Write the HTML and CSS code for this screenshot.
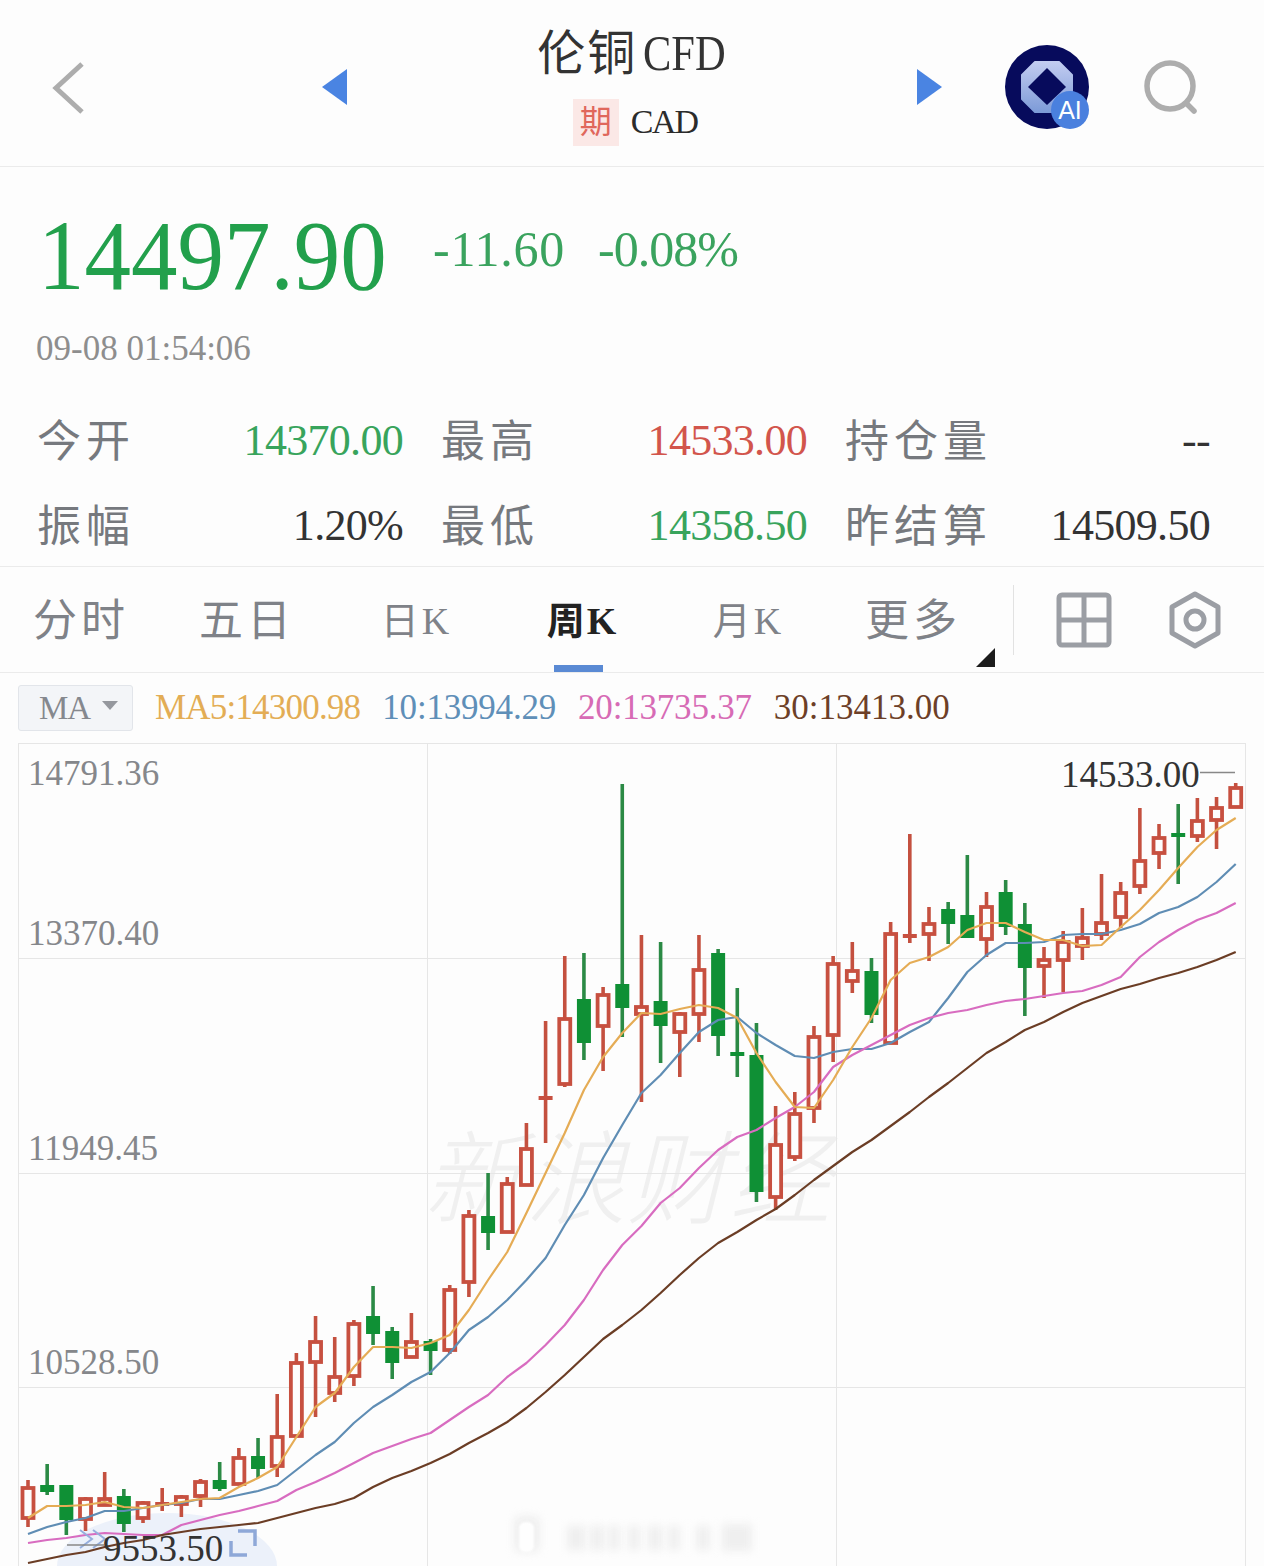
FILE: index.html
```html
<!DOCTYPE html>
<html lang="en">
<head>
    <meta charset="UTF-8">
    <meta name="viewport" content="width=device-width, initial-scale=1.0">
    <title>伦铜CFD</title>
    <link rel="stylesheet" href="styles.css">
</head>
<body>
    <div class="header">
        <div class="back">
            <svg width="34" height="54" viewBox="0 0 34 54"><path d="M30 3 L4 27 L30 51" class="back-line"/></svg>
        </div>
        <svg class="arrow" width="25" height="36" viewBox="0 0 25 36"><path d="M25 0 V36 L0 18 Z" fill="#4a84e2"/></svg>
        <div class="title-block">
            <div class="title">伦铜<span class="title-code">CFD</span></div>
            <div class="subtitle"><span class="tag">期</span><span class="code">CAD</span></div>
        </div>
        <svg class="arrow" width="25" height="36" viewBox="0 0 25 36"><path d="M0 0 V36 L25 18 Z" fill="#4a84e2"/></svg>
        <div class="ai-badge">
            <svg width="84" height="84" viewBox="0 0 84 84">
                <defs>
                    <linearGradient id="aiRing" x1="0" y1="0" x2="0" y2="1">
                        <stop offset="0" stop-color="#c2ccf1"/>
                        <stop offset="1" stop-color="#7d9bd8"/>
                    </linearGradient>
                </defs>
                <circle cx="42" cy="42" r="42" fill="#070b5c"/>
                <path d="M30 17 H54 L67 30 V54 L54 67 H30 L17 54 V30 Z" fill="url(#aiRing)" stroke="url(#aiRing)" stroke-width="2" stroke-linejoin="round"/>
                <path d="M42 23 L61 42 L42 60 L23 42 Z" fill="#070b5c"/>
            </svg>
            <span class="ai-dot">AI</span>
        </div>
        <svg class="search" width="56" height="56" viewBox="0 0 56 56"><circle cx="26" cy="26" r="23" fill="none" stroke="#adadad" stroke-width="5.5"/><path d="M43 44 L50 51" stroke="#adadad" stroke-width="5.5" stroke-linecap="round" fill="none"/></svg>
    </div>

    <div class="quote">
        <div class="price-row">
            <div class="price">14497.90</div>
            <div class="change">-11.60</div>
            <div class="change change-pct">-0.08%</div>
        </div>
        <div class="time">09-08 01:54:06</div>
        <div class="stats">
            <div class="stat"><span class="stat-name">今开</span><span class="stat-value green">14370.00</span></div>
            <div class="stat"><span class="stat-name">最高</span><span class="stat-value red">14533.00</span></div>
            <div class="stat"><span class="stat-name">持仓量</span><span class="stat-value">--</span></div>
            <div class="stat"><span class="stat-name">振幅</span><span class="stat-value">1.20%</span></div>
            <div class="stat"><span class="stat-name">最低</span><span class="stat-value green">14358.50</span></div>
            <div class="stat"><span class="stat-name">昨结算</span><span class="stat-value">14509.50</span></div>
        </div>
    </div>

    <div class="tabs">
        <div class="tab">分时</div>
        <div class="tab">五日</div>
        <div class="tab tab-k">日K</div>
        <div class="tab tab-k active">周K</div>
        <div class="tab tab-k">月K</div>
        <div class="tab more">更多</div>
        <div class="tab-tools">
            <svg width="56" height="56" viewBox="0 0 56 56"><rect x="3" y="3" width="50" height="50" rx="3" fill="none" stroke="#9b9ea4" stroke-width="5"/><path d="M28 3 V53 M3 28 H53" stroke="#9b9ea4" stroke-width="5"/></svg>
            <svg width="54" height="58" viewBox="0 0 54 58"><path d="M27 3 L50 16 V42 L27 55 L4 42 V16 Z" fill="none" stroke="#9b9ea4" stroke-width="5" stroke-linejoin="round"/><circle cx="27" cy="29" r="9" fill="none" stroke="#9b9ea4" stroke-width="5"/></svg>
        </div>
    </div>

    <div class="legend">
        <div class="ma-btn">MA<span class="ma-caret"></span></div>
        <span class="ma ma5">MA5:14300.98</span>
        <span class="ma ma10">10:13994.29</span>
        <span class="ma ma20">20:13735.37</span>
        <span class="ma ma30">30:13413.00</span>
    </div>

    <div class="chart">
        <div class="watermark">新浪财经</div>
        <svg class="chart-svg" id="chart" width="1228" height="823" viewBox="18 743 1228 823">
            <path class="grid" d="M427.5 743 V1566 M836.5 743 V1566 M18 958.5 H1246 M18 1173.5 H1246 M18 1387.5 H1246"/>
            <ellipse class="float-pill" cx="167" cy="1566" rx="110" ry="53"/>
            <g class="blur-mark">
                <rect x="514" y="1516" width="26" height="36" rx="6"/>
                <rect class="blur-core" x="519" y="1522" width="15" height="30" rx="6"/>
                <rect x="567" y="1526" width="18" height="24"/>
                <rect x="590" y="1526" width="14" height="24"/>
                <rect x="608" y="1526" width="12" height="24"/>
                <rect x="628" y="1526" width="12" height="24"/>
                <rect x="648" y="1526" width="14" height="24"/>
                <rect x="668" y="1526" width="12" height="24"/>
                <rect x="696" y="1526" width="14" height="24"/>
                <rect x="722" y="1524" width="30" height="27"/>
            </g>
            <g id="candles"></g>
            <g id="lines"></g>
            <path class="chev" d="M80 1530 L92 1539 L80 1548 M93 1530 L105 1539 L93 1548"/>
            <path class="corner" d="M238 1531 H255 V1546 M231 1541 V1555 H247"/>
            <path class="marker" d="M1200 772.5 H1235 M67 1545 H104"/>
        </svg>
        <span class="axis axis-1">14791.36</span>
        <span class="axis axis-2">13370.40</span>
        <span class="axis axis-3">11949.45</span>
        <span class="axis axis-4">10528.50</span>
        <span class="peak peak-high">14533.00</span>
        <span class="peak peak-low">9553.50</span>
    </div>

    <script src="chart.js"></script>
</body>
</html>
```

FILE: styles.css
```css
body, html {
    margin: 0;
    padding: 0;
    width: 100%;
    height: 100%;
    overflow: hidden;
    background-color: #fdfdfd;
    color: #2b2b2b;
    font-family: "Liberation Serif", "Noto Sans CJK SC", serif;
}

.header {
    height: 167px;
    box-sizing: border-box;
    padding: 10px 0 0 52px;
    display: flex;
    align-items: center;
    border-bottom: 1px solid #ebebeb;
}
.back {
    width: 270px;
    display: flex;
}
.back-line {
    fill: none;
    stroke: #adadad;
    stroke-width: 5;
}
.title-block {
    width: 570px;
    display: flex;
    flex-direction: column;
    align-items: center;
    margin-top: -8px;
}
.title {
    font-size: 48px;
    line-height: 60px;
    letter-spacing: 2px;
    color: #333;
}
.title-code {
    display: inline-block;
    font-size: 50px;
    letter-spacing: 0;
    margin-left: 6px;
    margin-right: -14px;
    transform: scaleX(0.85);
    transform-origin: left center;
}
.subtitle {
    display: flex;
    align-items: center;
    margin-top: 15px;
    margin-left: 6px;
}
.tag {
    width: 46px;
    height: 47px;
    background: #fbe8e6;
    color: #e0675c;
    font-size: 32px;
    line-height: 47px;
    text-align: center;
}
.code {
    margin-left: 12px;
    font-size: 34px;
    letter-spacing: -1.8px;
}
.ai-badge {
    position: relative;
    margin-left: 63px;
    width: 84px;
    height: 84px;
    margin-top: -2px;
}
.ai-dot {
    position: absolute;
    left: 46px;
    top: 46px;
    width: 38px;
    height: 38px;
    border-radius: 50%;
    background: #4a80de;
    color: #fff;
    font-family: "Liberation Sans", sans-serif;
    font-size: 25px;
    line-height: 38px;
    text-align: center;
}
.search {
    margin-left: 55px;
}
.arrow {
    margin-top: -3px;
}

.quote {
    height: 399px;
    box-sizing: border-box;
    padding-top: 29px;
}
.price-row {
    height: 120px;
    padding-left: 38px;
    display: flex;
    align-items: center;
    color: #22a04c;
}
.price {
    font-size: 100px;
    line-height: 120px;
    margin-right: 20px;
    transform: scaleX(0.93);
    transform-origin: left center;
}
.change {
    font-size: 50px;
    line-height: 60px;
    letter-spacing: 0.8px;
    padding-bottom: 14px;
    color: #3aa35e;
}
.change-pct {
    margin-left: 33px;
    letter-spacing: -1px;
}
.time {
    margin-top: 13px;
    padding-left: 36px;
    font-size: 35px;
    line-height: 40px;
    color: #8e8e8e;
}
.stats {
    margin-top: 26px;
    padding-left: 37px;
    display: grid;
    grid-template-columns: 366px 366px 365px;
    grid-auto-rows: 85px;
    column-gap: 38px;
}
.stat {
    display: flex;
    align-items: center;
    justify-content: space-between;
}
.stat-name {
    font-size: 44px;
    letter-spacing: 5px;
    color: #76797e;
}
.stat-value {
    font-size: 44px;
    letter-spacing: -0.7px;
    padding-top: 5px;
    color: #333;
}
.green {
    color: #38a45c;
}
.red {
    color: #d2554c;
}

.tabs {
    height: 105px;
    display: flex;
    align-items: center;
    margin-left: -2px;
    padding-right: 2px;
    border-top: 1px solid #ebebeb;
    border-bottom: 1px solid #ebebeb;
}
.tab {
    position: relative;
    box-sizing: border-box;
    width: 166px;
    height: 105px;
    line-height: 109px;
    text-align: center;
    font-size: 44px;
    letter-spacing: 4px;
    color: #7f8288;
}
.tab-k {
    padding-left: 7px;
    font-size: 38px;
    letter-spacing: 3px;
}
.tab.more {
    padding-left: 4px;
}
.tab.active {
    color: #222;
    font-weight: bold;
    letter-spacing: 2px;
}
.tab.active::after {
    content: "";
    position: absolute;
    left: 58px;
    bottom: 0;
    width: 49px;
    height: 7px;
    background: #5a8ad4;
}
.tab.more::after {
    content: "";
    position: absolute;
    right: -1px;
    bottom: 5px;
    border-left: 19px solid transparent;
    border-bottom: 19px solid #1c1c1c;
}
.tab-tools {
    margin-left: 19px;
    height: 70px;
    border-left: 1px solid #e2e2e2;
    display: flex;
    align-items: center;
    gap: 56px;
    padding-left: 42px;
}

.legend {
    height: 70px;
    padding-left: 18px;
    display: flex;
    align-items: center;
    box-sizing: border-box;
}
.ma-btn {
    width: 115px;
    height: 46px;
    box-sizing: border-box;
    background: #f3f5f8;
    border: 1px solid #e2e5ea;
    border-radius: 3px;
    padding-left: 20px;
    font-size: 33px;
    line-height: 48px;
    letter-spacing: -1px;
    color: #85888e;
    display: flex;
    align-items: center;
    margin-right: 22px;
}
.ma-caret {
    margin-left: 12px;
    margin-bottom: 6px;
    border-left: 8px solid transparent;
    border-right: 8px solid transparent;
    border-top: 9px solid #95989e;
}
.ma {
    font-size: 35px;
    letter-spacing: -0.2px;
    margin-right: 22px;
}
.ma5 { color: #e3ad55; letter-spacing: -0.8px; }
.ma10 { color: #5f8fb8; }
.ma20 { color: #d76bb5; }
.ma30 { color: #6d3f27; letter-spacing: 0; }

.chart {
    position: relative;
    width: 1228px;
    height: 823px;
    margin-left: 18px;
    overflow: hidden;
}
.chart-svg {
    position: absolute;
    left: 0;
    top: 0;
}
.chart::before {
    content: "";
    position: absolute;
    inset: 0;
    border: 1px solid #e6e6e6;
    border-bottom: 0;
}
.grid {
    stroke: #e6e6e6;
    stroke-width: 1;
    fill: none;
}
.float-pill {
    fill: #ecf1fa;
}
.blur-mark rect {
    fill: #efefef;
    filter: blur(4px);
}
.blur-mark .blur-core {
    fill: #fefefe;
    filter: blur(1px);
}
.watermark {
    position: absolute;
    left: 405px;
    top: 369px;
    font-family: "Noto Sans CJK SC", sans-serif;
    font-weight: 300;
    font-size: 102px;
    line-height: 120px;
    font-style: italic;
    white-space: nowrap;
    color: #f0f0f0;
}
.chev {
    fill: none;
    stroke: #96aedd;
    stroke-width: 2;
}
.corner {
    fill: none;
    stroke: #8ea8d8;
    stroke-width: 3.5;
}
.marker {
    fill: none;
    stroke: #888;
    stroke-width: 1.5;
}
.axis {
    position: absolute;
    left: 10px;
    font-size: 35px;
    line-height: 40px;
    color: #85878b;
}
.axis-1 { top: 11px; }
.axis-2 { top: 171px; }
.axis-3 { top: 386px; }
.axis-4 { top: 600px; }
.peak {
    position: absolute;
    font-size: 37px;
    line-height: 34px;
    color: #333;
}
.peak-high {
    left: 1043px;
    top: 15px;
}
.peak-low {
    left: 85px;
    top: 789px;
}
```

FILE: chart.js
```js
// [up, wickTop, bodyTop, bodyBottom, wickBottom]
const candles = [
    [1,1480,1487,1519,1527],[0,1464,1485,1492,1495],[0,1485,1485,1520,1535],[1,1497,1498,1520,1531],
    [1,1472,1498,1506,1506],[0,1489,1496,1524,1532],[1,1501,1502,1519,1523],[1,1488,1502,1505,1511],
    [1,1495,1496,1505,1517],[1,1479,1481,1497,1507],[0,1462,1480,1489,1491],[1,1448,1457,1485,1485],
    [0,1438,1456,1469,1478],[1,1394,1436,1467,1477],[1,1353,1362,1437,1437],[1,1316,1341,1363,1417],
    [1,1337,1376,1394,1402],[1,1320,1323,1377,1386],[0,1286,1316,1334,1345],[0,1327,1331,1363,1379],
    [1,1313,1341,1358,1358],[0,1339,1341,1351,1375],[1,1285,1289,1351,1354],[1,1210,1215,1283,1297],
    [0,1173,1216,1233,1250],[1,1177,1183,1233,1233],[1,1123,1148,1186,1186],[1,1021,1096,1099,1143],
    [1,956,1018,1085,1087],[0,953,999,1043,1060],[1,987,994,1027,1071],[0,784,984,1008,1037],
    [1,935,1006,1015,1102],[0,942,1001,1026,1063],[1,1012,1013,1033,1077],[1,935,969,1015,1042],
    [0,949,953,1036,1056],[0,988,1052,1056,1077],[0,1023,1055,1192,1202],[1,1106,1144,1198,1210],
    [1,1092,1113,1158,1161],[1,1026,1036,1109,1123],[1,956,963,1036,1062],[1,942,970,982,993],
    [0,958,971,1015,1023],[1,922,933,1044,1044],[1,834,934,937,943],[1,907,923,935,961],
    [0,902,909,924,944],[0,855,915,938,938],[1,892,906,940,957],[0,880,892,927,935],
    [0,903,924,968,1016],[1,947,959,967,998],[1,931,941,961,992],[1,908,937,947,960],
    [1,874,922,935,940],[1,882,892,918,928],[1,808,860,887,894],[1,824,837,854,869],
    [0,804,833,837,884],[1,798,820,837,842],[1,797,807,821,849],[1,783,787,808,808]
];

const maLines = {
    '#5f8db4': [1534,1527,1522,1518,1511,1511,1508,1505,1503,1499,1499,1495,1491,1485,1470,1455,1442,1423,1407,1395,1382,1372,1353,1330,1317,1300,1280,1258,1225,1195,1158,1125,1093,1075,1053,1032,1020,1017,1033,1045,1056,1058,1052,1049,1049,1043,1032,1022,998,972,955,943,943,942,935,934,934,930,924,913,907,897,882,864],
    '#d86cc0': [1543,1540,1538,1535,1533,1534,1535,1535,1525,1520,1515,1511,1506,1501,1490,1482,1473,1463,1453,1446,1439,1433,1420,1407,1395,1377,1363,1345,1325,1300,1270,1245,1226,1203,1188,1168,1150,1137,1130,1118,1107,1092,1067,1055,1045,1035,1025,1018,1013,1010,1005,1001,999,996,993,991,985,977,957,942,930,920,913,903],
    '#6b3d25': [1563,1559,1555,1552,1547,1543,1540,1535,1532,1529,1527,1525,1523,1518,1513,1508,1504,1498,1487,1478,1471,1463,1454,1443,1433,1422,1408,1392,1375,1357,1339,1325,1310,1293,1275,1258,1243,1232,1220,1209,1195,1180,1166,1152,1140,1126,1112,1097,1083,1068,1053,1042,1030,1022,1012,1003,996,989,984,978,973,967,960,952],
    '#e5ac55': [1518,1506,1506,1505,1502,1507,1508,1505,1502,1499,1498,1487,1478,1467,1437,1407,1393,1367,1347,1347,1348,1343,1335,1310,1280,1252,1213,1173,1133,1090,1057,1033,1013,1014,1009,1005,1008,1018,1053,1082,1107,1108,1080,1047,1018,980,963,957,947,930,923,923,932,940,940,946,945,927,910,890,868,847,830,818]
};

const NS = 'http://www.w3.org/2000/svg';
const xAt = i => 28 + 19.17 * i;

function addEl(parent, tag, attrs) {
    const el = document.createElementNS(NS, tag);
    Object.keys(attrs).forEach(k => el.setAttribute(k, attrs[k]));
    parent.appendChild(el);
}

const candleLayer = document.getElementById('candles');
candles.forEach((c, i) => {
    const x = xAt(i);
    const color = c[0] ? '#c75040' : '#0f9035';
    const wick = c[0] ? '#c4503f' : '#2b8a45';
    addEl(candleLayer, 'line', { x1: x, x2: x, y1: c[1], y2: c[4], stroke: wick, 'stroke-width': 3.6 });
    if (c[0] && c[3] - c[2] > 5) {
        addEl(candleLayer, 'rect', { x: x - 5.5, y: c[2] + 1, width: 11, height: c[3] - c[2] - 2, fill: '#fdfdfd', stroke: color, 'stroke-width': 3.8 });
    } else {
        addEl(candleLayer, 'rect', { x: x - 7, y: c[2], width: 14, height: Math.max(c[3] - c[2], 4), fill: color });
    }
});

const lineLayer = document.getElementById('lines');
Object.keys(maLines).forEach(color => {
    const points = maLines[color].map((y, i) => xAt(i) + ',' + y).join(' ');
    addEl(lineLayer, 'polyline', { points: points, fill: 'none', stroke: color, 'stroke-width': 2.2, 'stroke-linejoin': 'round' });
});
```
